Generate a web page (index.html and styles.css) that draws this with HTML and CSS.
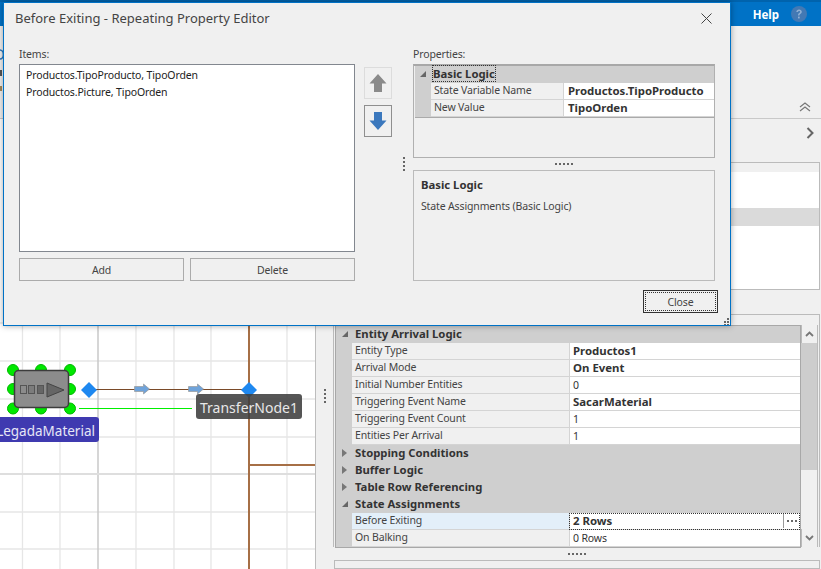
FILE: index.html
```html
<!doctype html>
<html lang="en">

<head>
	<meta charset="utf-8">
	<title>Before Exiting - Repeating Property Editor</title>
	<link rel="stylesheet" href="styles.css">
</head>

<body>

	<div class="app">

		<header class="topbar">
			<span class="help-text">Help</span>
			<svg class="help-icon" width="16" height="16" viewBox="0 0 16 16">
				<circle cx="8" cy="8" r="8" fill="#4379b4" />
				<path d="M5.3 6.1C5.4 4.4 6.5 3.4 8.1 3.4c1.6 0 2.7 1 2.7 2.3 0 1.1-.6 1.7-1.4 2.2-.7.5-.9.8-.9 1.6H7c0-1.3.3-1.9 1.2-2.5.6-.4.9-.7.9-1.2 0-.5-.4-.9-1-.9-.7 0-1.1.4-1.2 1.2z" fill="#8fb0d4" />
				<rect x="7" y="10.6" width="1.7" height="1.8" fill="#8fb0d4" />
			</svg>
		</header>

		<div class="ribbon">
			<svg class="ribbon-bits" width="4" height="70" viewBox="0 0 4 70">
				<path d="M0 24a3 4 0 0 1 0 9" fill="none" stroke="#2b78c0" stroke-width="1.5" />
				<rect y="44" width="2" height="6" fill="#555" />
				<rect y="60" width="2" height="5" fill="#a58a5a" />
			</svg>
			<svg class="collapse-icon" width="12" height="10" viewBox="0 0 12 10">
				<path d="M1 5l5-4 5 4M1 9l5-4 5 4" fill="none" stroke="#777" stroke-width="1.2" />
			</svg>
		</div>

		<div class="workspace">

			<div class="canvas">
				<svg class="canvas-art" width="315" height="450" viewBox="0 119 315 450">
					<g class="grid-minor">
						<path d="M22.5 119V569M60 119V569M136 119V569M174 119V569M211 119V569M287 119V569" />
						<path d="M0 323H315M0 361H315M0 399H315M0 437H315M0 512H315M0 549H315" />
					</g>
					<path class="grid-major" d="M98 119V569" />
					<path class="grid-major-soft" d="M0 474H315" />
					<path class="path-thick" d="M249 119V569M249 465H315" />
					<path class="path-thin" d="M96 389.5H243" />
					<path class="link-green" d="M79 408.5H192" />
					<path class="path-arrow" d="M134.5 386.5h9V384l6 5-6 5v-2.500h-9z" />
					<path class="path-arrow" d="M188.5 386.5h9V384l6 5-6 5v-2.500h-9z" />
					<g class="handles">
						<circle cx="13" cy="370" r="5.5" />
						<circle cx="41" cy="370" r="5.5" />
						<circle cx="70" cy="370" r="5.5" />
						<circle cx="13" cy="389" r="5.5" />
						<circle cx="70" cy="389" r="5.5" />
						<circle cx="13" cy="408.5" r="5.5" />
						<circle cx="41" cy="408.5" r="5.5" />
						<circle cx="70" cy="408.5" r="5.5" />
					</g>
					<rect x="14.5" y="370.5" width="54" height="37" rx="4" fill="#8c8c8c" stroke="#3c3c3c" stroke-width="1.5" />
					<rect x="20.5" y="385.5" width="6" height="8" fill="#8c8c8c" stroke="#555" />
					<rect x="28.5" y="385.5" width="6" height="8" fill="#7c7c7c" stroke="#555" />
					<rect x="37.5" y="385.5" width="6" height="8" fill="#666" stroke="#555" />
					<path d="M47 383L64 390L47 397z" fill="#666" stroke="#444" />
					<path class="diamond" d="M89 382l8 8-8 8-8-8z" />
					<path class="diamond" d="M249 382l8 8-8 8-8-8z" />
				</svg>
				<div class="node-label source-label">LegadaMaterial</div>
				<div class="node-label transfer-label">TransferNode1</div>
			</div>

			<div class="v-splitter">
				<span class="dots-v"></span>
			</div>

			<div class="side">
				<div class="side-tabs">
					<svg width="9" height="12" viewBox="0 0 9 12">
						<path d="M1.5 1l5 5-5 5" fill="none" stroke="#666" stroke-width="2" />
					</svg>
				</div>

				<div class="side-list">
					<div class="side-list-row"></div>
					<div class="side-list-row"></div>
					<div class="side-list-row is-selected"></div>
				</div>

				<div class="side-props">
					<div class="pg pg-wide">
						<div class="pg-cat"><i class="tw tw-open"></i><b>Entity Arrival Logic</b></div>
						<div class="pg-row"><span class="pg-name">Entity Type</span><span class="pg-val is-set">Productos1</span></div>
						<div class="pg-row"><span class="pg-name">Arrival Mode</span><span class="pg-val is-set">On Event</span></div>
						<div class="pg-row"><span class="pg-name">Initial Number Entities</span><span class="pg-val">0</span></div>
						<div class="pg-row"><span class="pg-name">Triggering Event Name</span><span class="pg-val is-set">SacarMaterial</span></div>
						<div class="pg-row"><span class="pg-name">Triggering Event Count</span><span class="pg-val">1</span></div>
						<div class="pg-row"><span class="pg-name">Entities Per Arrival</span><span class="pg-val">1</span></div>
						<div class="pg-cat"><i class="tw tw-closed"></i><b>Stopping Conditions</b></div>
						<div class="pg-cat"><i class="tw tw-closed"></i><b>Buffer Logic</b></div>
						<div class="pg-cat"><i class="tw tw-closed"></i><b>Table Row Referencing</b></div>
						<div class="pg-cat"><i class="tw tw-open"></i><b>State Assignments</b></div>
						<div class="pg-row is-active"><span class="pg-name">Before Exiting</span><span class="pg-val is-set is-focus">2 Rows<span class="pg-more"><span class="dots-h dots-dark"></span></span></span></div>
						<div class="pg-row"><span class="pg-name">On Balking</span><span class="pg-val">0 Rows</span></div>
					</div>
					<div class="scrollbar">
						<div class="scroll-btn">
							<svg width="9" height="6" viewBox="0 0 9 6"><path d="M1 5l3.5-3.500L8 5" fill="none" stroke="#777" stroke-width="1.8" /></svg>
						</div>
						<div class="scroll-thumb"></div>
						<div class="scroll-btn scroll-btn-end">
							<svg width="9" height="6" viewBox="0 0 9 6"><path d="M1 1l3.5 3.500L8 1" fill="none" stroke="#777" stroke-width="1.8" /></svg>
						</div>
					</div>
				</div>

				<div class="h-splitter"><span class="dots-h"></span></div>
				<div class="side-desc"></div>
			</div>

		</div>

		<!-- dialog lies over the whole app -->
		<section class="dialog">

			<div class="dialog-head">
				<h1 class="dialog-title">Before Exiting - Repeating Property Editor</h1>
				<svg class="dialog-close" width="11" height="11" viewBox="0 0 11 11">
					<path d="M.5 .5l10 10M10.5 .5l-10 10" stroke="#444" fill="none" />
				</svg>
			</div>

			<div class="dialog-body">

				<div class="items-col">
					<label class="field-label">Items:</label>
					<div class="listbox">
						<div>Productos.TipoProducto, TipoOrden</div>
						<div>Productos.Picture, TipoOrden</div>
					</div>
					<div class="items-btns">
						<button class="btn">Add</button>
						<button class="btn">Delete</button>
					</div>
				</div>

				<div class="move-col">
					<button class="move-btn is-disabled">
						<svg width="18" height="18" viewBox="0 0 18 18"><path d="M9 0l8.5 9.5H13V18H5V9.5H.5z" fill="#8a8a8a" /></svg>
					</button>
					<button class="move-btn">
						<svg width="18" height="18" viewBox="0 0 18 18"><path d="M9 18L.5 8.5H5V0h8v8.5h4.500z" fill="#3b78bd" /></svg>
					</button>
				</div>

				<div class="dialog-splitter"><span class="dots-v"></span></div>

				<div class="props-col">
					<label class="field-label">Properties:</label>
					<div class="pg-box">
						<div class="pg pg-small">
							<div class="pg-cat"><i class="tw tw-open"></i><b class="is-focus">Basic Logic</b></div>
							<div class="pg-row"><span class="pg-name">State Variable Name</span><span class="pg-val is-set">Productos.TipoProducto</span></div>
							<div class="pg-row"><span class="pg-name">New Value</span><span class="pg-val is-set">TipoOrden</span></div>
						</div>
					</div>
					<div class="h-splitter h-splitter-dialog"><span class="dots-h"></span></div>
					<div class="desc-box">
						<b class="desc-title">Basic Logic</b>
						<p class="desc-text">State Assignments (Basic Logic)</p>
					</div>
					<div class="dialog-foot">
						<button class="btn btn-default">Close</button>
					</div>
				</div>

			</div>

			<svg class="grip" width="7" height="7" viewBox="0 0 7 7">
				<path d="M4 0h2v2H4zM1 3h2v2H1zM4 3h2v2H4zM-2 6h2v1h-2zM1 6h2v1H1zM4 6h2v1H4z" fill="#666" />
			</svg>
		</section>

	</div>

</body>

</html>
```

FILE: styles.css
```css
* {
	box-sizing: border-box;
}

html,
body {
	height: 100%;
	margin: 0;
}

body {
	background: #f0f0f0;
	color: #333;
	font: 10.5px "Noto Sans", sans-serif;
	letter-spacing: -0.14px;
}

button {
	font: inherit;
	letter-spacing: inherit;
}

.app {
	display: flex;
	flex-direction: column;
	height: 569px;
	overflow: hidden;
	position: relative;
	width: 821px;
}

/* top bar */

.topbar {
	align-items: center;
	background: #0072c6;
	border-top: 2px solid #0063ad;
	display: flex;
	flex: none;
	gap: 12px;
	height: 26px;
	justify-content: flex-end;
	padding-right: 14px;
}

.help-text {
	color: #fff;
	font-size: 11.5px;
	font-weight: 700;
	letter-spacing: 0;
}

.ribbon {
	align-items: flex-end;
	border-bottom: 1px solid #c9c9c9;
	display: flex;
	flex: none;
	height: 93px;
	justify-content: space-between;
	padding: 0 10px 6px 0;
}

.ribbon-bits {
	align-self: flex-start;
}

/* canvas */

.workspace {
	display: flex;
	flex: 1;
	min-height: 0;
}

.canvas {
	background: #fff;
	border-right: 1px solid #bdbdbd;
	flex: none;
	position: relative;
	width: 316px;
}

.canvas-art {
	display: block;
}

.grid-minor path {
	fill: none;
	stroke: #e6e6e6;
	stroke-width: 1.3;
}

.grid-major {
	fill: none;
	stroke: #c8c8c8;
	stroke-width: 1.5;
}

.grid-major-soft {
	fill: none;
	stroke: #dedede;
	stroke-width: 2;
}

.path-thick {
	fill: none;
	stroke: #a66f46;
	stroke-width: 2;
}

.path-thin {
	fill: none;
	stroke: #7a4a28;
}

.link-green {
	fill: none;
	stroke: #00f000;
}

.path-arrow {
	fill: #6fa3da;
	stroke: #9a9a9a;
	stroke-width: .7;
}

.handles circle {
	fill: #00e800;
	stroke: #00b800;
}

.diamond {
	fill: #1e88f0;
}

.node-label {
	border-radius: 3px;
	font-size: 14px;
	height: 25px;
	letter-spacing: 0;
	position: absolute;
	white-space: nowrap;
}

.source-label {
	background: #3f3ab0;
	color: #e6e6f6;
	font-size: 13.5px;
	left: -30px;
	line-height: 28px;
	padding-right: 4px;
	text-align: right;
	top: 298px;
	width: 129px;
}

.transfer-label {
	background: rgba(62, 62, 62, 0.88);
	color: #e8e8e8;
	left: 196px;
	line-height: 27px;
	text-align: center;
	top: 275px;
	width: 106px;
}

/* splitters */

.v-splitter {
	align-items: flex-start;
	display: flex;
	flex: none;
	justify-content: center;
	padding-top: 270px;
	width: 17px;
}

.dots-v {
	background: repeating-linear-gradient(180deg, #666 0 2px, transparent 2px 4px);
	display: block;
	height: 14px;
	width: 2px;
}

.dots-h {
	background: repeating-linear-gradient(90deg, #666 0 2px, transparent 2px 4px);
	display: block;
	height: 2px;
	width: 18px;
}

.h-splitter {
	align-items: center;
	display: flex;
	flex: none;
	height: 13px;
	justify-content: center;
}

/* right side */

.side {
	display: flex;
	flex: 1;
	flex-direction: column;
	min-width: 0;
	padding-right: 1px;
}

.side-tabs {
	align-items: flex-start;
	display: flex;
	flex: none;
	height: 43px;
	justify-content: flex-end;
	padding: 8px 5px 0 0;
}

.side-list {
	background: #fff;
	border: 1px solid #bbb;
	box-shadow: inset 0 9px 0 #f0f0f0;
	flex: none;
	height: 128px;
	margin-left: 1px;
	padding-top: 9px;
}

.side-list-row {
	height: 18px;
}

.side-list-row.is-selected {
	background: #dadada;
}

.side-props {
	border: 1px solid #bbb;
	border-bottom: 0;
	display: flex;
	flex: none;
	height: 233px;
	margin: 24px 0 0;
	padding: 10px 1px 0 1px;
}

.side-desc {
	border: 1px solid #bbb;
	flex: 1;
	margin-left: 1px;
}

/* property grid */

.pg {
	background: #cfcfcf;
	flex: none;
}

.pg-wide {
	border: 1px solid #a8a8a8;
	height: 223px;
	width: 466px;
}

.pg-cat {
	align-items: center;
	background: #cfcfcf;
	color: #333;
	display: flex;
	font-size: 11.3px;
	height: 17px;
	letter-spacing: 0;
	padding-bottom: 2px;
}

.tw {
	flex: none;
	height: 0;
	margin: 0 7px 0 6px;
	width: 0;
}

.tw-open {
	border-bottom: 6px solid #666;
	border-left: 6px solid transparent;
}

.tw-closed {
	border-bottom: 4px solid transparent;
	border-left: 5px solid #777;
	border-top: 4px solid transparent;
	margin: 0 8px 0 6px;
}

.pg-row {
	display: flex;
	height: 17px;
	margin-left: 16px;
}

.pg-name {
	background: #f0f0f0;
	border-bottom: 1px solid #d4d4d4;
	color: #444;
	flex: none;
	line-height: 14px;
	padding-left: 3px;
	width: 217px;
}

.pg-val {
	align-items: center;
	background: #fff;
	border-bottom: 1px solid #d4d4d4;
	border-left: 1px solid #d4d4d4;
	display: flex;
	flex: 1;
	height: 17px;
	padding: 0 0 1px 3px;
	position: relative;
}

.pg-val.is-set {
	color: #333;
	font-size: 11.4px;
	font-weight: 700;
	letter-spacing: 0;
}

.pg-row.is-active .pg-name {
	background: #e3eff9;
}

.pg-val.is-focus {
	outline: 1px dotted #333;
	outline-offset: -1px;
}

.pg-more {
	align-items: center;
	border-left: 1px solid #999;
	bottom: 1px;
	display: flex;
	justify-content: center;
	position: absolute;
	right: 1px;
	top: 1px;
	width: 16px;
}

.dots-dark {
	width: 10px;
}

/* scrollbar */

.scrollbar {
	background: #f0f0f0;
	border-right: 1px solid #bbb;
	display: flex;
	flex: 1;
	flex-direction: column;
}

.scroll-btn {
	align-items: center;
	border-left: 1px solid #bbb;
	display: flex;
	flex: none;
	height: 18px;
	justify-content: center;
}

.scroll-thumb {
	background: #cdcdcd;
	flex: none;
	height: 127px;
}

.scroll-btn-end {
	margin-top: auto;
}

/* dialog */

.dialog {
	background: #f0f0f0;
	border: 1px solid #0072c6;
	box-shadow: 0 0 6px rgba(0, 0, 0, 0.35);
	display: flex;
	flex-direction: column;
	height: 324px;
	left: 3px;
	position: absolute;
	top: 2px;
	width: 728px;
}

.dialog-head {
	align-items: flex-start;
	display: flex;
	flex: none;
	height: 45px;
	justify-content: space-between;
	padding: 5px 18px 0 11px;
}

.dialog-title {
	color: #444;
	font-size: 13px;
	font-weight: 400;
	letter-spacing: 0;
	line-height: 20px;
	margin: 0;
}

.dialog-close {
	margin-top: 5px;
}

.dialog-body {
	display: flex;
	flex: 1;
	padding-left: 15px;
}

.field-label {
	color: #444;
	display: block;
	height: 16px;
	line-height: 12px;
}

.items-col {
	flex: none;
	width: 336px;
}

.listbox {
	background: #fff;
	border: 1px solid #82878f;
	color: #222;
	height: 188px;
	line-height: 17px;
	padding: 2px 6px;
}

.items-btns {
	display: flex;
	gap: 6px;
	margin-top: 6px;
}

.btn {
	background: #f0f0f0;
	border: 1px solid #ababab;
	color: #444;
	flex: 1;
	height: 23px;
	padding: 0;
}

.move-col {
	display: flex;
	flex: none;
	flex-direction: column;
	gap: 6px;
	margin-left: 9px;
	padding-top: 19px;
	width: 28px;
}

.move-btn {
	align-items: center;
	background: #f0f0f0;
	border: 1px solid #8f8f8f;
	display: flex;
	height: 32px;
	justify-content: center;
	padding: 0;
	width: 28px;
}

.move-btn.is-disabled {
	border-color: #dcdcdc;
}

.dialog-splitter {
	flex: none;
	padding: 109px 0 0 11px;
	width: 21px;
}

.props-col {
	flex: none;
	width: 302px;
}

.pg-box {
	border: 1px solid #b0b0b0;
	border-top: 2px solid #a8a8a8;
	height: 94px;
	padding-left: 1px;
}

.pg-small {
	border-bottom: 1px solid #aaa;
}

.pg-small .pg-name {
	width: 132px;
}

.pg-small .pg-val {
	padding-left: 4px;
}

.pg-small .tw {
	margin-left: 5px;
}

.pg-box .pg-cat b.is-focus {
	outline: 1px dotted #333;
}

.h-splitter-dialog {
	height: 12px;
}

.desc-box {
	border: 1px solid #bbb;
	height: 111px;
	padding: 6px 7px 0;
}

.desc-title {
	color: #333;
	display: block;
	font-size: 11.3px;
	letter-spacing: 0;
	line-height: 15px;
}

.desc-text {
	color: #444;
	line-height: 15px;
	margin: 7px 0 0;
}

.dialog-foot {
	display: flex;
	justify-content: flex-end;
	margin: 9px -3px 0 0;
}

.btn-default {
	border-color: #333;
	flex: none;
	outline: 1px dotted #333;
	outline-offset: -3px;
	width: 75px;
}

.grip {
	bottom: 0;
	position: absolute;
	right: 0;
}
```
